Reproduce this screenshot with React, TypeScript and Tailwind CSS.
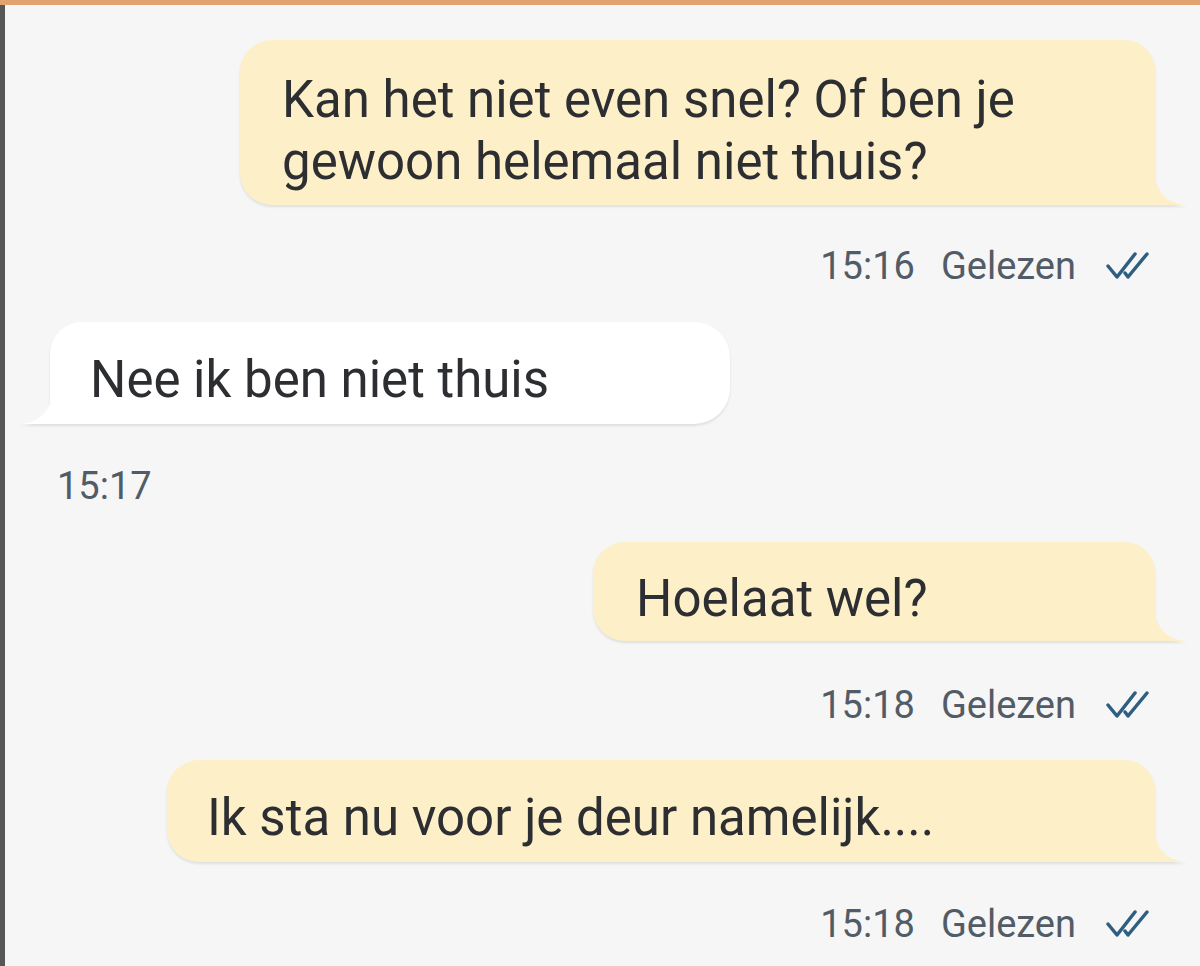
import React from 'react';

type Msg = {
  text: string[];
  mine: boolean;
  time: string;
  box: string;
};

const messages: Msg[] = [
  {
    text: ['Kan het niet even snel? Of ben je', 'gewoon helemaal niet thuis?'],
    mine: true,
    time: '15:16',
    box: 'w-[915px] pl-[42px] pt-[29px] pb-[12px] leading-[62px]',
  },
  {
    text: ['Nee ik ben niet thuis'],
    mine: false,
    time: '15:17',
    box: 'w-[680px] pl-[40px] pt-[28px] pb-[14px] leading-[60px]',
  },
  {
    text: ['Hoelaat wel?'],
    mine: true,
    time: '15:18',
    box: 'w-[562px] pl-[43px] pt-[27px] pb-[12px] leading-[60px]',
  },
  {
    text: ['Ik sta nu voor je deur namelijk....'],
    mine: true,
    time: '15:18',
    box: 'w-[988px] pl-[40px] pt-[28px] pb-[14px] leading-[60px]',
  },
];

const ReadTicks = () => (
  <svg width="44" height="28" viewBox="0 0 44 28" fill="none" className="ml-[30px]">
    <path d="M2 14 L11 25 L29 2" stroke="#2e5f82" strokeWidth="3.5" strokeLinecap="round" strokeLinejoin="round" />
    <path d="M19 21 L22 25 L41 2" stroke="#2e5f82" strokeWidth="3.5" strokeLinecap="round" strokeLinejoin="round" />
  </svg>
);

const Tail = ({ mine, color }: { mine: boolean; color: string }) =>
  mine ? (
    <svg width="34" height="38" viewBox="0 0 34 38" className="absolute bottom-0 right-[-32px]">
      <path d="M0 0 Q2 36 34 38 L0 38 Z" fill={color} />
    </svg>
  ) : (
    <svg width="34" height="40" viewBox="0 0 34 40" className="absolute bottom-0 left-[-30px]">
      <path d="M34 0 Q32 38 0 40 L34 40 Z" fill={color} />
    </svg>
  );

const Bubble = ({ msg }: { msg: Msg }) => {
  const color = msg.mine ? '#fdf0c9' : '#ffffff';
  return (
    <div className={msg.mine ? 'flex justify-end pr-[45px]' : 'flex justify-start pl-[45px]'}>
      <div className="relative drop-shadow-[0_2px_1px_rgba(0,0,0,0.09)]">
        <div
          className={
            msg.mine
              ? `bg-[#fdf0c9] rounded-tl-[32px] rounded-tr-[30px] rounded-bl-[32px] ${msg.box}`
              : `bg-white rounded-tr-[36px] rounded-br-[36px] rounded-tl-[32px] ${msg.box}`
          }
        >
          {msg.text.map((line) => (
            <div key={line} className="text-[51px] text-[#2c2e31] whitespace-nowrap">
              {line}
            </div>
          ))}
        </div>
        <Tail mine={msg.mine} color={color} />
      </div>
    </div>
  );
};

const Meta = ({ msg }: { msg: Msg }) =>
  msg.mine ? (
    <div className="flex items-center justify-end pr-[50px] h-[44px] text-[38px] text-[#525c67]">
      <span>{msg.time}</span>
      <span className="ml-[26px]">Gelezen</span>
      <ReadTicks />
    </div>
  ) : (
    <div className="flex items-center pl-[52px] h-[44px] text-[38px] text-[#525c67]">
      <span>{msg.time}</span>
    </div>
  );

export default function App() {
  return (
    <div className="w-[1200px] h-[966px] overflow-hidden bg-[#f6f6f6] flex flex-col font-['Roboto',sans-serif]">
      <div className="h-[5px] bg-[#e3a36f] shrink-0" />
      <div className="flex flex-1">
        <div className="w-[5px] bg-[#575757] shrink-0" />
        <div className="flex-1 flex flex-col">
          <div className="mt-[35px]">
            <Bubble msg={messages[0]} />
          </div>
          <div className="mt-[39px]">
            <Meta msg={messages[0]} />
          </div>
          <div className="mt-[34px]">
            <Bubble msg={messages[1]} />
          </div>
          <div className="mt-[40px]">
            <Meta msg={messages[1]} />
          </div>
          <div className="mt-[34px]">
            <Bubble msg={messages[2]} />
          </div>
          <div className="mt-[42px]">
            <Meta msg={messages[2]} />
          </div>
          <div className="mt-[33px]">
            <Bubble msg={messages[3]} />
          </div>
          <div className="mt-[40px]">
            <Meta msg={messages[3]} />
          </div>
        </div>
      </div>
    </div>
  );
}
